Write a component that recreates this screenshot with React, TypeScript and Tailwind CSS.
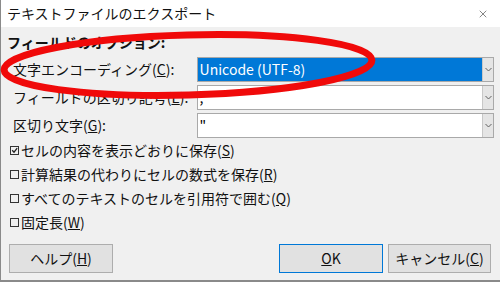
import { X } from "lucide-react";

const font = "font-['Noto_Sans_CJK_JP','Noto_Sans',sans-serif]";

function Chevron() {
  return (
    <svg width="7" height="5" viewBox="0 0 7 5" className="text-[#606060]">
      <polyline points="0.5,1 3.5,4 6.5,1" fill="none" stroke="currentColor" strokeWidth="1" />
    </svg>
  );
}

function Select({ value, active }: { value: string; active?: boolean }) {
  return (
    <div className="flex h-[25px] w-[298px] border border-[#a9a9a9] bg-white">
      <div
        className={`flex flex-1 items-center px-[2px] text-[14px] ${
          active ? "bg-[#0078d7] text-white" : "text-black"
        }`}
      >
        {value}
      </div>
      <div className="flex w-[11px] items-center justify-center border-l border-[#c8c8c8] bg-[#e5e5e5]">
        <Chevron />
      </div>
    </div>
  );
}

function Box({ checked }: { checked?: boolean }) {
  return (
    <svg width="10" height="10" viewBox="0 0 10 10" className="mr-[1px] shrink-0">
      <rect x="0.5" y="1.5" width="8" height="8" fill="none" stroke="#333" strokeWidth="1" />
      {checked && (
        <polyline points="2.2,5.3 4,7.2 7.2,3.2" fill="none" stroke="#222" strokeWidth="1.3" />
      )}
    </svg>
  );
}

const rows = [
  { label: "文字エンコーディング", key: "C", value: "Unicode (UTF-8)", active: true },
  { label: "フィールドの区切り記号", key: "E", value: "," },
  { label: "区切り文字", key: "G", value: '"' },
];

const checks = [
  { label: "セルの内容を表示どおりに保存", key: "S", checked: true },
  { label: "計算結果の代わりにセルの数式を保存", key: "R" },
  { label: "すべてのテキストのセルを引用符で囲む", key: "Q" },
  { label: "固定長", key: "W" },
];

export default function App() {
  return (
    <div className={`relative h-[282px] w-[500px] overflow-hidden bg-[#f0f0f0] ${font} text-[#111]`}>
      <div className="flex h-full flex-col border-b-2 border-l border-[#8a8a8a]">
        <div className="flex h-[27px] items-center justify-between bg-white pl-[6px] pr-[11px] text-[14px]">
          <span>テキストファイルのエクスポート</span>
          <X size={12} strokeWidth={1.2} className="text-[#333]" />
        </div>

        <div className="flex flex-1 flex-col px-[6px] pt-[7px]">
          <div className="h-[16px] text-[14px] font-bold leading-[16px]">フィールドのオプション:</div>

          <div className="mt-[7px] flex flex-col gap-[3px]">
            {rows.map((r) => (
              <div key={r.key} className="flex items-center">
                <div className="w-[190px] pl-[6px] text-[14px]">
                  {r.label}(<span className="underline">{r.key}</span>):
                </div>
                <Select value={r.value} active={r.active} />
              </div>
            ))}
          </div>

          <div className="flex flex-col">
            {checks.map((c) => (
              <div key={c.key} className="flex h-[24px] items-center pl-[3px] text-[14px]">
                <Box checked={c.checked} />
                <span>
                  {c.label}(<span className="underline">{c.key}</span>)
                </span>
              </div>
            ))}
          </div>

          <div className="mt-[10px] flex items-center">
            <button className="ml-[2px] h-[29px] w-[104px] border border-[#adadad] bg-[#e1e1e1] text-[14px]">
              ヘルプ(<span className="underline">H</span>)
            </button>
            <div className="flex-1" />
            <button className="h-[29px] w-[104px] border border-[#0078d7] bg-[#e1e1e1] text-[14px]">
              <span className="underline">O</span>K
            </button>
            <button className="ml-[5px] mr-[3px] h-[29px] w-[103px] border border-[#adadad] bg-[#e1e1e1] text-[14px]">
              キャンセル(<span className="underline">C</span>)
            </button>
          </div>
        </div>
      </div>

      <svg className="pointer-events-none absolute inset-0" width="500" height="282">
        <ellipse cx="188" cy="65" rx="184" ry="30" transform="rotate(-1.5 188 65)" fill="none" stroke="#f00a0a" strokeWidth="7" />
      </svg>
    </div>
  );
}
